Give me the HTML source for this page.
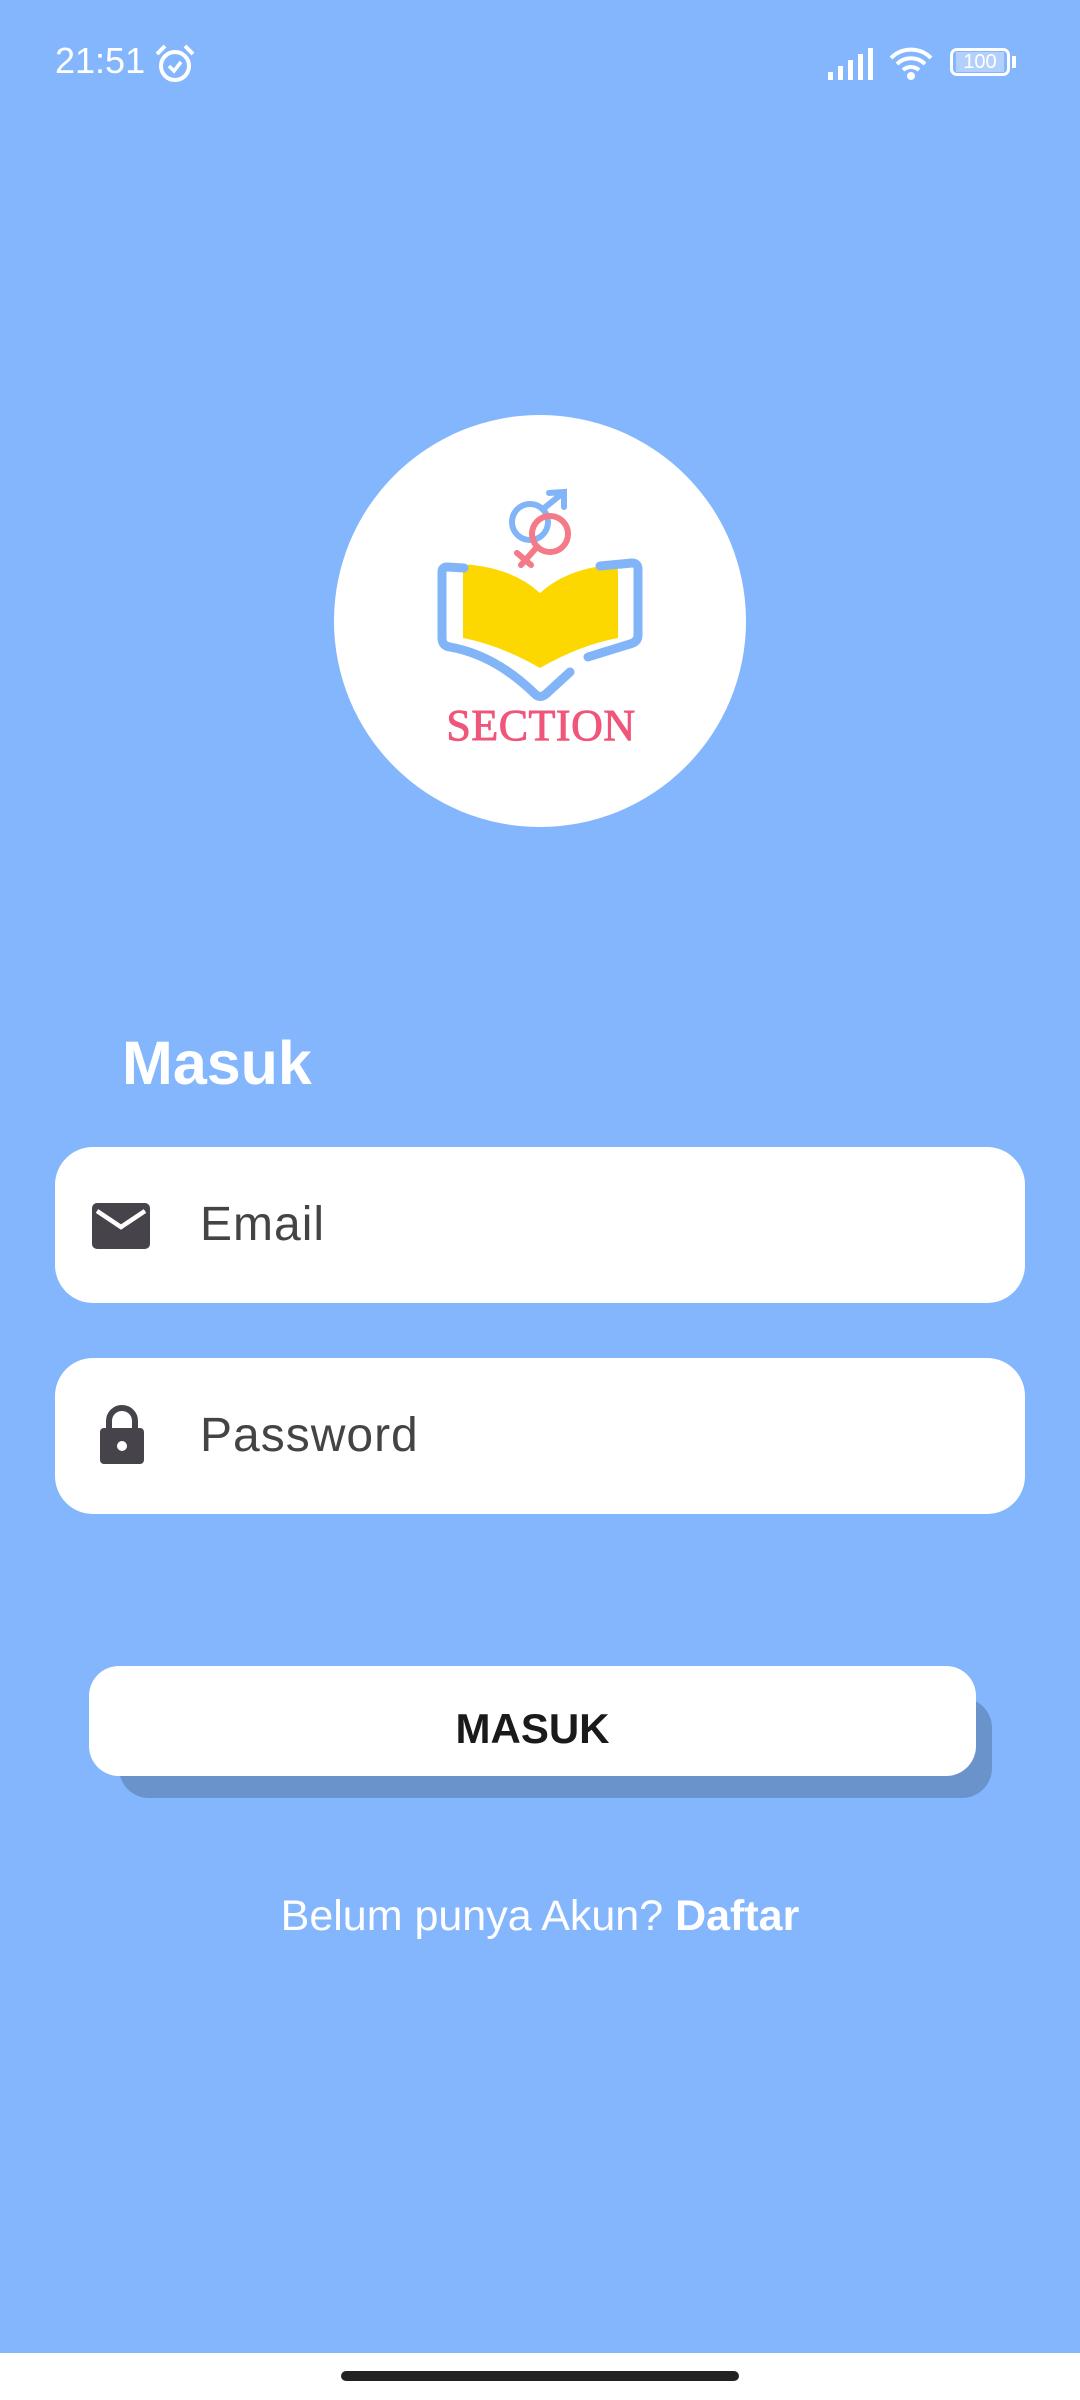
<!DOCTYPE html>
<html><head><meta charset="utf-8"><style>
body{margin:0;width:1080px;height:2400px;background:#84b6fd;position:relative;overflow:hidden;font-family:"Liberation Sans",Roboto,sans-serif}
.abs{position:absolute}
.field{position:absolute;left:55px;width:970px;height:156px;background:#fff;border-radius:38px}
.ph{position:absolute;left:145px;top:0;line-height:156px;font-size:48px;color:#444;letter-spacing:1px}
</style></head><body>
<div class="abs" style="left:55px;top:40px;font-size:36px;color:#fff">21:51</div>
<svg class="abs" style="left:153px;top:42px" width="44" height="44" viewBox="0 0 44 44"><circle cx="22" cy="24" r="14" fill="none" stroke="#fff" stroke-width="4"/><path d="M16 24l5 5 7-9" fill="none" stroke="#fff" stroke-width="3.5"/><path d="M4 12l8-8M40 12l-8-8" stroke="#fff" stroke-width="4"/></svg>
<svg class="abs" style="left:826px;top:46px" width="50" height="36"><rect x="2" y="26" width="5" height="8" fill="#fff"/><rect x="12" y="20" width="5" height="14" fill="#fff"/><rect x="22" y="14" width="5" height="20" fill="#fff"/><rect x="32" y="8" width="5" height="26" fill="#fff"/><rect x="42" y="2" width="5" height="32" fill="#fff"/></svg>
<svg class="abs" style="left:888px;top:44px" width="46" height="38" viewBox="0 0 46 38"><path d="M3 14a28 28 0 0 1 40 0M9 20a20 20 0 0 1 28 0M15 26a12 12 0 0 1 16 0" fill="none" stroke="#fff" stroke-width="4"/><circle cx="23" cy="32" r="4" fill="#fff"/></svg>
<div class="abs" style="left:950px;top:48px;width:60px;height:28px;border:3px solid #fff;border-radius:7px;box-sizing:border-box"></div>
<div class="abs" style="left:956px;top:52px;width:48px;height:20px;background:#b3d0fc;color:#fff;font-size:20px;line-height:20px;text-align:center">100</div>
<div class="abs" style="left:1012px;top:56px;width:4px;height:12px;background:#fff"></div>

<div class="abs" style="left:334px;top:415px;width:412px;height:412px;border-radius:50%;background:#fff"></div>
<svg class="abs" style="left:330px;top:410px" width="420" height="420" viewBox="0 0 420 420">
<path d="M133 163 Q133 153 143 155 Q185 160 210 183 Q235 160 278 155 Q288 153 288 163 L288 228 Q250 235 210 258 Q170 235 133 228 Z" fill="#fdd700"/>
<path d="M134 158 L117 157 Q112 157 112 162 L112 228 Q112 236 120 237 Q165 245 205 284 Q210 289 216 284 L240 262" fill="none" stroke="#82b5f8" stroke-width="9" stroke-linecap="round" stroke-linejoin="round"/>
<path d="M270 156 L302 153 Q308 153 308 159 L308 225 Q308 232 300 234 L258 247" fill="none" stroke="#82b5f8" stroke-width="9" stroke-linecap="round" stroke-linejoin="round"/>
<circle cx="200" cy="112" r="18" fill="none" stroke="#82b5f8" stroke-width="6"/>
<path d="M213 99 L233 83 M219 83 L234 82 L234 97" fill="none" stroke="#82b5f8" stroke-width="6" stroke-linecap="round"/>
<circle cx="220" cy="124" r="18" fill="none" stroke="#f37a86" stroke-width="6"/>
<path d="M207 137 L191 155 M187 143 L201 155" fill="none" stroke="#f37a86" stroke-width="6" stroke-linecap="round"/>
<text x="211" y="330" text-anchor="middle" font-family="Liberation Serif,serif" font-size="44" fill="#f0557a" stroke="#f0557a" stroke-width="0.9" style="letter-spacing:0.5px">SECTION</text>
</svg>

<div class="abs" style="left:122px;top:1028px;font-size:61px;font-weight:bold;color:#fff">Masuk</div>

<div class="field" style="top:1147px">
<svg class="abs" style="left:37px;top:56px" width="58" height="46" viewBox="0 0 58 46"><rect x="0" y="0" width="58" height="46" rx="5" fill="#46434a"/><path d="M5 8 L29 24 L53 8" fill="none" stroke="#fff" stroke-width="4.5"/></svg>
<div class="ph">Email</div></div>
<div class="field" style="top:1358px">
<svg class="abs" style="left:43px;top:46px" width="48" height="62" viewBox="0 0 48 62"><path d="M11 26 V17 a13 13 0 0 1 26 0 V26" fill="none" stroke="#46434a" stroke-width="6"/><rect x="2" y="24" width="44" height="36" rx="4" fill="#46434a"/><circle cx="24" cy="42" r="5" fill="#fff"/></svg>
<div class="ph">Password</div></div>

<div class="abs" style="left:119px;top:1698px;width:873px;height:100px;border-radius:30px;background:#6a93cc"></div>
<div class="abs" style="left:89px;top:1666px;width:887px;height:110px;border-radius:30px;background:#fff;text-align:center;line-height:126px;font-size:42px;font-weight:bold;color:#1a1a1a">MASUK</div>

<div class="abs" style="left:0;width:1080px;top:1892px;text-align:center;font-size:43px;color:#fff">Belum punya Akun? <b>Daftar</b></div>

<div class="abs" style="left:0;top:2353px;width:1080px;height:47px;background:#fff"></div>
<div class="abs" style="left:341px;top:2371px;width:398px;height:10px;border-radius:5px;background:#222"></div>
</body></html>
